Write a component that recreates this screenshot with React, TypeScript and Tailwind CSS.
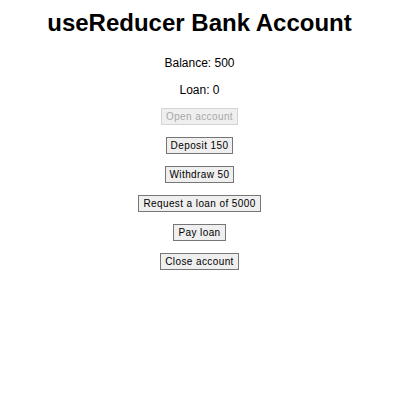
export default function App() {
  const buttons = [
    { label: "Open account", disabled: true },
    { label: "Deposit 150" },
    { label: "Withdraw 50" },
    { label: "Request a loan of 5000" },
    { label: "Pay loan" },
    { label: "Close account" },
  ]

  return (
    <div className="w-[399px] min-h-[401px] bg-white flex flex-col items-center font-['Liberation_Sans',Arial,sans-serif] text-black">
      <h1 className="mt-[9px] text-[24px] leading-[28px] font-bold">useReducer Bank Account</h1>
      <p className="mt-[19px] text-[12px] leading-[14px]">Balance: 500</p>
      <p className="mt-[13px] text-[12px] leading-[14px]">Loan: 0</p>
      <div className="mt-[11px] flex flex-col items-center gap-[12px]">
        {buttons.map((b) => (
          <button
            key={b.label}
            disabled={b.disabled}
            className={
              "h-[17px] px-[4px] text-[10px] leading-[13px] tracking-[0.4px] border bg-[#efefef] " +
              (b.disabled
                ? "border-[#d4d4d4] text-[#a8a8a8]"
                : "border-[#767676] text-black")
            }
          >
            {b.label}
          </button>
        ))}
      </div>
    </div>
  )
}
